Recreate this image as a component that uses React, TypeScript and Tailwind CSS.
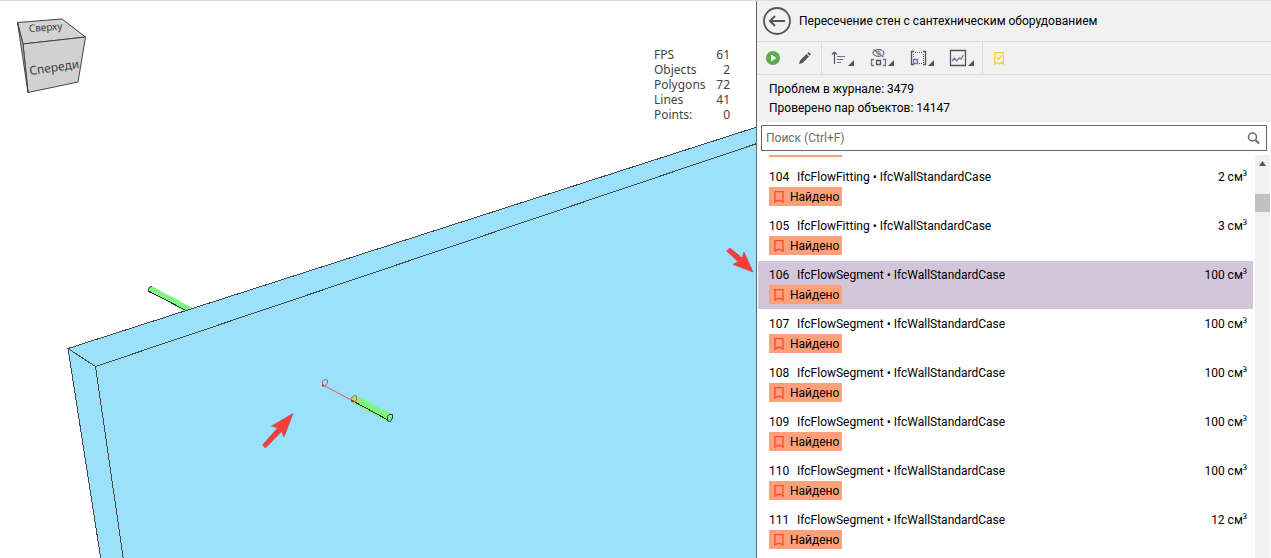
import { useState } from "react";
import type { ReactNode } from "react";

type Issue = { id: number; first: string; volume: number };

const issues: Issue[] = [
  { id: 104, first: "IfcFlowFitting", volume: 2 },
  { id: 105, first: "IfcFlowFitting", volume: 3 },
  { id: 106, first: "IfcFlowSegment", volume: 100 },
  { id: 107, first: "IfcFlowSegment", volume: 100 },
  { id: 108, first: "IfcFlowSegment", volume: 100 },
  { id: 109, first: "IfcFlowSegment", volume: 100 },
  { id: 110, first: "IfcFlowSegment", volume: 100 },
  { id: 111, first: "IfcFlowSegment", volume: 12 },
];

const stats: [string, number][] = [
  ["FPS", 61],
  ["Objects", 2],
  ["Polygons", 72],
  ["Lines", 41],
  ["Points:", 0],
];

function Scene() {
  return (
    <svg className="absolute inset-0 h-full w-full" viewBox="0 1 756 557" preserveAspectRatio="xMinYMin slice" aria-label="3D">
      <g shapeRendering="crispEdges">
        <path d="M147 290 L151 286 L193 308 L186 312 Z" fill="#80f77f" />
        <path d="M148.500 291 L187 311" stroke="#333" fill="none" />
        <path d="M68 348.500 L757 127 L757 560 L101 560 Z" fill="#9be1fb" />
        <g stroke="#484848" fill="none">
          <path d="M757 127 L68 348.500 L101 560" />
          <path d="M757 143.500 L95.500 366.500 L123.500 560" />
          <path d="M68 348.500 L95.500 366.500" />
        </g>
        <path d="M353 395 L356 395.500 L392 414 L389 421 L384 420 L352 403 Z" fill="#80f77f" />
        <path d="M352 400.500 L387 419.500" stroke="#333" fill="none" />
      </g>
      <path d="M148.500 289.500 L149.500 287 L152 286.500 M148.500 289.500 L148.500 291.500 L150 292.500" stroke="#333" fill="none" />
      <path d="M387.500 416.500 L389 414.500 L392.500 414.500 L392.500 418 L390.500 421.500 L387.500 421 Z" stroke="#333" fill="#80f77f" />
      <g stroke="#d85a6c" fill="none">
        <path d="M324 385.500 L352 400.500" />
        <path d="M322.500 384 L322.500 381 L325 379.500 L327.500 380 L327.500 383.500 L324.500 386 Z" />
        <path d="M351.500 400 L352 397 L354.500 395.500 L356.500 396 L356.500 400 L353.500 402.500 Z" stroke="#b8672f" />
        <path d="M322 385.500 h2 M351 401 h3" stroke="#e62232" strokeWidth="2" />
      </g>
      <g fill="#fb3c38" stroke="#a5504f" strokeWidth="0.6">
        <path d="M293 413.500 L284 437 L281.500 431.500 L265.500 448 L262.500 445 L277.500 428 L271.500 426 Z" />
        <path d="M753 272 L733 264.500 L738 261.500 L726.500 251 L730 248 L742 258 L744 252 Z" />
      </g>
      <g stroke="#444" strokeLinejoin="round">
        <path d="M17.500 22.500 L62 19 L85.500 37 L23 44 Z" fill="#d3d3d3" />
        <path d="M23 44 L85.500 37 L78 82 L28 92.500 Z" fill="#d1d1d1" />
        <path d="M17.500 22.500 L23 44 L28 92.500 Z" fill="#bdbdbd" />
      </g>
      <g fill="#3c3c3c" fontFamily="'Noto Sans', sans-serif">
        <text x="29" y="32" fontSize="10" transform="rotate(-4 29 32)">Сверху</text>
        <text x="30" y="75" fontSize="12" transform="rotate(-8 30 75)">Спереди</text>
      </g>
    </svg>
  );
}

function ToolButton({ label, className, children }: { label: string; className: string; children: ReactNode }) {
  return (
    <button type="button" aria-label={label} className={`flex h-8 items-center justify-center ${className}`}>
      {children}
    </button>
  );
}

const corner = <path d="M26 11 V17 H20 Z" fill="#555" />;

function Toolbar() {
  return (
    <div className="flex h-[33px] border-b border-[#dcdcdc]">
      <div className="flex w-[65px] border-r border-[#dcdcdc]">
        <ToolButton label="Запустить" className="w-8">
          <svg width="14" height="14" viewBox="0 0 14 14">
            <circle cx="7" cy="7" r="7" fill="#5aad46" />
            <path d="M5 3.500 L10.500 7 L5 10.500 Z" fill="#fff" />
          </svg>
        </ToolButton>
        <ToolButton label="Изменить" className="w-8">
          <svg width="12" height="12" viewBox="0 0 12 12" fill="#555">
            <path d="M0 12 L1 8.500 L7.500 2 L10 4.500 L3.500 11 Z M8.300 1.300 L9.600 0 L12 2.300 L10.700 3.700 Z" />
          </svg>
        </ToolButton>
      </div>
      <div className="flex w-[161px] border-r border-[#dcdcdc]">
        <ToolButton label="Сортировка" className="w-10">
          <svg width="28" height="18" viewBox="0 0 28 18" fill="none">
            <path d="M6.500 15 V3 M4 5.500 L6.500 3 L9 5.500" stroke="#555" strokeWidth="1.200" />
            <path d="M9 7.500 h8 M9 10.500 h6 M9 13.500 h4" stroke="#8a63a3" strokeWidth="1.200" />
            {corner}
          </svg>
        </ToolButton>
        <ToolButton label="Видимость" className="w-10">
          <svg width="28" height="18" viewBox="0 0 28 18" fill="none">
            <ellipse cx="10.500" cy="4" rx="5.500" ry="3.300" stroke="#666" strokeWidth="1.200" />
            <circle cx="10.500" cy="4" r="1.700" stroke="#888" />
            <path d="M5.500 0.500 L15.500 8" stroke="#8a63a3" strokeWidth="1.200" />
            <path d="M6 10.500 H3.500 V16.500 H6 M15 10.500 h2.500 V16.500 H15" stroke="#8a63a3" strokeWidth="1.300" />
            <path d="M8.500 11.500 h4 v4 h-4 Z" stroke="#555" strokeWidth="1.300" />
            {corner}
          </svg>
        </ToolButton>
        <ToolButton label="Выделение" className="w-10">
          <svg width="28" height="18" viewBox="0 0 28 18" fill="none">
            <path d="M6 2.500 H3.500 V15.500 H6 M15 2.500 h2.500 V15.500 H15" stroke="#555" strokeWidth="1.300" />
            <path d="M7 3.500 h8 M7 14.500 h8 M5.500 5 v4 M15.500 5 v9" stroke="#555" strokeDasharray="1 1" />
            <path d="M5.500 10.500 h4 v4 h-4 Z" stroke="#8a63a3" strokeWidth="1.300" />
            {corner}
          </svg>
        </ToolButton>
        <ToolButton label="Диаграмма" className="w-10">
          <svg width="28" height="18" viewBox="0 0 28 18" fill="none">
            <path d="M2.500 1.500 h15 v15 h-15 Z" stroke="#555" strokeWidth="1.300" />
            <path d="M4 12 L6.500 9 L8.500 12 L11.500 9 L13 10 L15.500 6" stroke="#8a63a3" strokeWidth="1.300" />
            {corner}
          </svg>
        </ToolButton>
      </div>
      <ToolButton label="Закладка" className="w-8">
        <svg width="10" height="13" viewBox="0 0 10 13" fill="none" stroke="#ffcc33">
          <path d="M0.700 0.700 h8.600 v11.300 L7.500 10.500 L5 12 L2.500 10.500 L0.700 12 Z" strokeWidth="1.300" />
          <path d="M2.800 5.500 L4.500 7.200 L7.500 3.500" strokeWidth="1.300" />
        </svg>
      </ToolButton>
    </div>
  );
}

function IssueRow({ issue, selected, onSelect }: { issue: Issue; selected: boolean; onSelect: () => void }) {
  return (
    <li className="mb-px">
      <button
        type="button"
        aria-pressed={selected}
        onClick={onSelect}
        className={`flex h-12 w-full items-start justify-between pt-1 pr-1.5 pl-[11px] text-left ${selected ? "bg-[#d3c6da]" : "bg-white"}`}
      >
        <span className="flex flex-col items-start">
          <span className="flex h-5 items-center whitespace-nowrap">
            <span className="w-7">{issue.id}</span>
            <span>{issue.first} • IfcWallStandardCase</span>
          </span>
          <span className="flex h-[19px] w-[73px] items-center gap-1.5 bg-[#ffa07a] pl-[5px]">
            <svg width="10" height="12" viewBox="0 0 10 12" fill="none" stroke="#fa4b32" strokeWidth="1.300">
              <path d="M1 0.700 h8 v10.500 L6.500 9.500 H3.500 L1 11.200 Z" />
            </svg>
            Найдено
          </span>
        </span>
        <span className="h-5 leading-5 whitespace-nowrap">
          {issue.volume} см<span className="font-['Noto_Sans',sans-serif]">³</span>
        </span>
      </button>
    </li>
  );
}

export default function App() {
  const [selected, setSelected] = useState(106);

  return (
    <div className="flex h-screen overflow-hidden border-t border-[#dcdcdc] bg-white font-['Roboto','Noto_Sans',sans-serif] text-xs text-black">
      <main className="relative min-w-0 flex-1 overflow-hidden">
        <Scene />
        <table className="absolute top-[46px] right-[26px] w-[76px] font-['Noto_Sans',sans-serif] leading-[15px] text-[#444]">
          <tbody>
            {stats.map(([name, value]) => (
              <tr key={name}>
                <th scope="row" className="text-left font-normal">{name}</th>
                <td className="text-right">{value}</td>
              </tr>
            ))}
          </tbody>
        </table>
      </main>
      <aside className="flex w-[515px] shrink-0 flex-col border-l border-[#666]">
        <div className="bg-[#f1f1f1]">
          <header className="flex h-[41px] items-center gap-2 border-b border-[#dcdcdc] pl-1.5">
            <button type="button" aria-label="Назад">
              <svg width="28" height="28" viewBox="0 0 28 28" fill="none" stroke="#555">
                <circle cx="14" cy="14" r="13" strokeWidth="1.800" />
                <path d="M22 14 H7 M12 9 L7 14 L12 19" strokeWidth="2" />
              </svg>
            </button>
            <h1>Пересечение стен с сантехническим оборудованием</h1>
          </header>
          <Toolbar />
          <div className="h-[47px] pt-[5px] pl-3 leading-[19px]">
            <p>Проблем в журнале: 3479</p>
            <p>Проверено пар объектов: 14147</p>
          </div>
        </div>
        <label className="mx-1 mt-[3px] mb-1 flex h-[26px] shrink-0 items-center border border-[#666] px-1">
          <input type="text" aria-label="Поиск" placeholder="Поиск (Ctrl+F)" className="min-w-0 flex-1 outline-none placeholder:text-[#6e6e6e]" />
          <svg className="mr-0.5" width="13" height="13" viewBox="0 0 13 13" fill="none" stroke="#666">
            <circle cx="5.500" cy="5" r="4" strokeWidth="1.500" />
            <path d="M8.500 8 L12 11.500" strokeWidth="2" />
          </svg>
        </label>
        <div className="flex min-h-0 flex-1 pr-px pl-px">
          <div className="mr-0.5 min-w-0 flex-1 overflow-hidden">
            <div className="mb-1.5 ml-[11px] h-0.5 w-[73px] bg-[#ffa07a]" />
            <ul>
              {issues.map((issue) => (
                <IssueRow key={issue.id} issue={issue} selected={issue.id === selected} onSelect={() => setSelected(issue.id)} />
              ))}
            </ul>
          </div>
          <div className="flex w-[15px] flex-col items-center bg-[#f1f1f1] pt-1.5">
            <svg width="7" height="5" viewBox="0 0 7 5">
              <path d="M0 5 L3.500 0 L7 5 Z" fill="#555" />
            </svg>
            <div className="mt-7 h-[18px] w-full bg-[#c1c1c1]" />
          </div>
        </div>
      </aside>
    </div>
  );
}
